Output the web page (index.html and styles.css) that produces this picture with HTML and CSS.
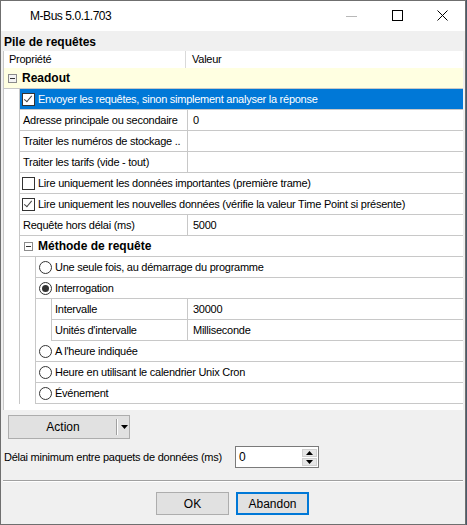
FILE: index.html
```html
<!DOCTYPE html>
<html>
<head>
  <meta charset="UTF-8" />
  <title>M-Bus 5.0.1.703</title>
  <link rel="stylesheet" href="styles.css">
</head>
<body>

<div class="window">
  <!-- Barre de titre -->
  <div class="titlebar">
    <span class="title">M-Bus 5.0.1.703</span>
    <div class="caption">
      <span class="cap-btn cap-min"><svg width="12" height="12" viewBox="0 0 12 12"><path d="M0 6.5h11" stroke="#b8b8b8" stroke-width="1"/></svg></span>
      <span class="cap-btn"><svg width="12" height="12" viewBox="0 0 12 12"><rect x="0.5" y="0.5" width="10" height="10" fill="none" stroke="#000" stroke-width="1"/></svg></span>
      <span class="cap-btn"><svg width="12" height="12" viewBox="0 0 12 12"><path d="M0.5 0.5L10.5 10.5M10.5 0.5L0.5 10.5" stroke="#000" stroke-width="1"/></svg></span>
    </div>
  </div>

  <div class="client">
    <div class="group-title">Pile de requêtes</div>

    <!-- Grille des propriétés -->
    <div class="grid">
      <div class="grid-head">
        <div class="name">Propriété</div>
        <div class="value">Valeur</div>
      </div>

      <div class="category top">
        <span class="toggle"></span><span class="cat-label">Readout</span>
      </div>

      <div class="children">
        <div class="row full selected">
          <span class="check on"></span>Envoyer les requêtes, sinon simplement analyser la réponse
        </div>
        <div class="row">
          <div class="name">Adresse principale ou secondaire</div>
          <div class="value">0</div>
        </div>
        <div class="row">
          <div class="name">Traiter les numéros de stockage ..</div>
          <div class="value"></div>
        </div>
        <div class="row">
          <div class="name">Traiter les tarifs (vide - tout)</div>
          <div class="value"></div>
        </div>
        <div class="row full">
          <span class="check"></span>Lire uniquement les données importantes (première trame)
        </div>
        <div class="row full">
          <span class="check on"></span>Lire uniquement les nouvelles données (vérifie la valeur Time Point si présente)
        </div>
        <div class="row">
          <div class="name">Requête hors délai (ms)</div>
          <div class="value">5000</div>
        </div>

        <div class="category">
          <span class="toggle"></span><span class="cat-label">Méthode de requête</span>
        </div>

        <div class="children">
          <div class="row full">
            <span class="radio"></span>Une seule fois, au démarrage du programme
          </div>
          <div class="row full">
            <span class="radio on"></span>Interrogation
          </div>
          <div class="children">
            <div class="row">
              <div class="name">Intervalle</div>
              <div class="value">30000</div>
            </div>
            <div class="row">
              <div class="name">Unités d'intervalle</div>
              <div class="value">Milliseconde</div>
            </div>
          </div>
          <div class="row full">
            <span class="radio"></span>A l'heure indiquée
          </div>
          <div class="row full">
            <span class="radio"></span>Heure en utilisant le calendrier Unix Cron
          </div>
          <div class="row full">
            <span class="radio"></span>Événement
          </div>
        </div>
      </div>
    </div>

    <div class="action-btn">
      <span class="action-label">Action</span>
      <span class="action-drop"><svg width="8" height="5" viewBox="0 0 8 5"><path d="M0 0h7L3.5 4z" fill="#000"/></svg></span>
    </div>

    <div class="delay-line">
      <span class="delay-label">Délai minimum entre paquets de données (ms)</span>
      <div class="spin">
        <span class="spin-text">0</span>
        <div class="spin-btns">
          <span class="spin-btn"><svg width="7" height="4" viewBox="0 0 7 4"><path d="M0 4h7L3.5 0z" fill="#000"/></svg></span>
          <span class="spin-btn"><svg width="7" height="4" viewBox="0 0 7 4"><path d="M0 0h7L3.5 4z" fill="#000"/></svg></span>
        </div>
      </div>
    </div>

    <div class="separator"></div>

    <div class="buttons">
      <button class="btn">OK</button>
      <button class="btn default">Abandon</button>
    </div>
  </div>
</div>

</body>
</html>
```

FILE: styles.css
```css
body {
  margin: 0;
  background: #4a5a6a;
  font-family: "Liberation Sans", Arial, sans-serif;
  font-size: 11px;
  color: #000;
}

.window {
  width: 464px;
  height: 523px;
  border: 1px solid #6f6f6f;
  background: #f0f0f0;
  display: flex;
  flex-direction: column;
}

/* Barre de titre */
.titlebar {
  height: 30px;
  background: #fff;
  display: flex;
  align-items: center;
  flex-shrink: 0;
}

.title {
  padding-left: 29px;
  font-size: 12px;
  letter-spacing: -0.45px;
  flex: 1;
}

.caption {
  display: flex;
  height: 30px;
}

.cap-btn {
  width: 45px;
  display: flex;
  align-items: center;
  justify-content: center;
}

.cap-btn svg {
  display: block;
}

.cap-min {
  margin-right: 1px;
}

/* Zone cliente */
.client {
  flex: 1;
  display: flex;
  flex-direction: column;
  padding: 0 2px 0 2px;
}

.group-title {
  font-weight: bold;
  font-size: 12px;
  height: 20px;
  line-height: 23px;
  padding-left: 1px;
}

.grid {
  height: 359px;
  flex-shrink: 0;
  background: #fff;
  border-left: 1px solid #c8c8c8;
  letter-spacing: -0.25px;
}

.grid-head {
  display: flex;
  height: 17px;
  line-height: 17px;
}

.grid-head .name {
  padding-left: 5px;
  width: 176px;
  overflow: hidden;
  white-space: nowrap;
}

.grid-head .value {
  flex: 1;
  border-left: 1px solid #d9d9d9;
  padding-left: 6px;
}

.category {
  height: 20px;
  border-bottom: 1px solid #c8c8c8;
  display: flex;
  align-items: center;
}

.category.top {
  background: #ffffe1;
}

.toggle {
  width: 9px;
  height: 9px;
  border: 1px solid #8c8c8c;
  box-sizing: border-box;
  margin-left: 4px;
  margin-right: 5px;
  position: relative;
  background: #fff;
}

.category.top .toggle {
  background: #f4f4f4;
}

.toggle::after {
  content: "";
  position: absolute;
  left: 1px;
  top: 3px;
  width: 5px;
  height: 1px;
  background: #333;
}

.cat-label {
  font-weight: bold;
  font-size: 12px;
  letter-spacing: 0;
}

.children {
  margin-left: 15px;
  border-left: 1px solid #c8c8c8;
}

.row {
  display: flex;
  height: 20px;
  line-height: 20px;
  border-bottom: 1px solid #c8c8c8;
  white-space: nowrap;
}

.row .name {
  flex: 1;
  padding-left: 3px;
  overflow: hidden;
}

.row .value {
  width: 270px;
  flex-shrink: 0;
  border-left: 1px solid #c8c8c8;
  padding-left: 5px;
}

.row.full {
  align-items: center;
  padding-left: 2px;
  overflow: hidden;
}

.row.selected {
  background: #0078d7;
  color: #fff;
}

.check,
.radio {
  width: 13px;
  height: 13px;
  box-sizing: border-box;
  border: 1px solid #333;
  background: #fff;
  margin-right: 3px;
  flex-shrink: 0;
  position: relative;
}

.check.on::after {
  content: "";
  position: absolute;
  left: 3px;
  top: 0px;
  width: 3px;
  height: 7px;
  border: solid #444;
  border-width: 0 1px 1px 0;
  transform: rotate(40deg);
  transform-origin: 50% 50%;
}

.radio {
  border-radius: 50%;
  margin-left: 1px;
  margin-right: 3px;
}

.radio.on::after {
  content: "";
  position: absolute;
  left: 2px;
  top: 2px;
  width: 7px;
  height: 7px;
  border-radius: 50%;
  background: #333;
}

/* Bouton Action */
.action-btn {
  margin: 5px 0 0 5px;
  width: 120px;
  height: 22px;
  flex-shrink: 0;
  border: 1px solid #adadad;
  background: #e1e1e1;
  display: flex;
  align-items: center;
}

.action-label {
  width: 109px;
  text-align: center;
  font-size: 12px;
}

.action-drop {
  height: 16px;
  border-left: 1px solid #fff;
  box-shadow: -1px 0 0 #a0a0a0;
  padding-left: 3px;
  display: flex;
  align-items: center;
}

.delay-line {
  display: flex;
  align-items: center;
  margin-top: 7px;
  height: 22px;
  flex-shrink: 0;
}

.delay-label {
  padding-left: 1px;
  width: 231px;
  font-size: 11px;
  letter-spacing: -0.25px;
  white-space: nowrap;
}

.spin {
  width: 82px;
  height: 20px;
  border: 1px solid #7a7a7a;
  background: #fff;
  display: flex;
  align-items: center;
}

.spin-text {
  flex: 1;
  padding-left: 3px;
  font-size: 12px;
}

.spin-btns {
  display: flex;
  flex-direction: column;
  width: 15px;
  margin-right: 1px;
  gap: 1px;
}

.spin-btn {
  height: 8px;
  background: #e6e6e6;
  border: 1px solid #d0d0d0;
  box-sizing: border-box;
  display: flex;
  align-items: center;
  justify-content: center;
}

.spin-btn svg {
  display: block;
}

.separator {
  margin-top: 12px;
  height: 1px;
  background: #a0a0a0;
  border-bottom: 1px solid #fff;
}

.buttons {
  display: flex;
  justify-content: center;
  gap: 7px;
  margin-top: 10px;
  padding-right: 1px;
}

.btn {
  width: 73px;
  height: 23px;
  border: 1px solid #adadad;
  background: #e1e1e1;
  font-family: "Liberation Sans", Arial, sans-serif;
  font-size: 12px;
  padding: 0;
}

.btn.default {
  border: 2px solid #0078d7;
}
```
